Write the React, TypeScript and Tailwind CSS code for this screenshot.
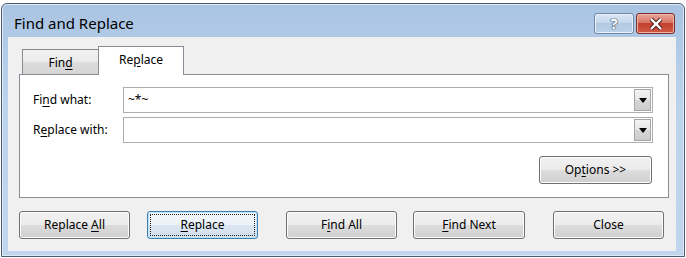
import React from 'react';

const font = "font-['Segoe_UI','Noto_Sans',sans-serif]";

function Key({ children }: { children: React.ReactNode }) {
  return <span className="underline underline-offset-2">{children}</span>;
}

function DropButton() {
  return (
    <div className="flex h-[22px] w-[17px] items-center justify-center border border-[#a6a6a6] bg-[linear-gradient(#f3f3f3_0%,#e6e6e6_50%,#d6d6d6_50%,#cdcdcd_100%)]">
      <svg width="8" height="5" viewBox="0 0 8 5">
        <path d="M0 0h8L4 5z" fill="#000" />
      </svg>
    </div>
  );
}

function Combo({ value }: { value?: string }) {
  return (
    <div className="flex h-[26px] w-[530px] items-center border border-[#abadb3] bg-white pl-[4px] pr-[1px]">
      <div className="flex-1 text-[12px] text-black">{value}</div>
      <DropButton />
    </div>
  );
}

interface IButtonProps {
  children: React.ReactNode;
  focused?: boolean;
  className?: string;
}

function Button({ children, focused, className = '' }: IButtonProps) {
  if (focused) {
    return (
      <div
        className={`flex h-[28px] w-[111px] items-center justify-center rounded-[3px] border border-[#3c7fb1] bg-[linear-gradient(#f3f8fc_0%,#eaf1f8_50%,#dbe6f1_50%,#d2dfec_100%)] p-[2px] shadow-[inset_0_0_0_1px_#c5e3f8] ${className}`}
      >
        <div className="flex h-full w-full items-center justify-center border border-dotted border-[#202020] text-[12px] text-black">
          <span>{children}</span>
        </div>
      </div>
    );
  }
  return (
    <div
      className={`flex h-[28px] w-[111px] items-center justify-center rounded-[3px] border border-[#707070] bg-[linear-gradient(#f2f2f2_0%,#ebebeb_50%,#dddddd_50%,#cfcfcf_100%)] text-[12px] text-black shadow-[inset_0_0_0_1px_#fcfcfc] ${className}`}
    >
      <span>{children}</span>
    </div>
  );
}

export default function App() {
  return (
    <div className={`h-[258px] w-[686px] overflow-hidden bg-white ${font}`}>
      <div className="ml-[1px] mt-[3px] flex h-[254px] w-[684px] flex-col rounded-t-[6px] border border-[#4b5c70] bg-[linear-gradient(#a9c4e2_0%,#bcd3ec_40%,#c0d6ee_100%)] shadow-[inset_0_0_0_1px_#dfeaf6]">
        {/* title bar */}
        <div className="flex h-[33px] items-start">
          <div className="pl-[12px] pt-[10px] text-[15px] leading-[18px] text-black">Find and Replace</div>
          <div className="ml-auto mr-[9px] mt-[9px] flex gap-[2px]">
            <div className="flex h-[21px] w-[40px] items-center justify-center rounded-[3px] border border-[#6f8aa8] bg-[linear-gradient(#d9e6f4_0%,#c5d7ec_50%,#b2c9e3_50%,#bcd2ea_100%)] shadow-[inset_0_0_0_1px_#e8f0f9]">
              <span className="text-[15px] font-bold leading-none text-white [text-shadow:0_0_1px_#42566d,0_0_1px_#42566d,0_0_1px_#42566d,0_0_1px_#42566d]">?</span>
            </div>
            <div className="flex h-[21px] w-[39px] items-center justify-center rounded-[3px] border border-[#7a2e28] bg-[linear-gradient(#e9a99b_0%,#d77565_45%,#c4402f_50%,#d05b47_100%)] shadow-[inset_0_0_0_1px_#eeb4a8]">
              <svg width="14" height="12" viewBox="0 0 14 12">
                <path d="M2 1l5 5 5-5M2 11l5-5 5 5" stroke="#4a1a14" strokeWidth="4.2" fill="none" />
                <path d="M2 1l5 5 5-5M2 11l5-5 5 5" stroke="#fff" strokeWidth="2.4" fill="none" />
              </svg>
            </div>
          </div>
        </div>

        {/* client area */}
        <div className="ml-[6px] flex h-[214px] w-[668px] flex-col bg-[#f0f0f0] px-[11px]">
          {/* tabs */}
          <div className="mt-[9px] flex h-[28px] items-end pl-[3px]">
            <div className="flex h-[25px] w-[76px] items-center justify-center border border-b-0 border-r-0 border-[#898c95] bg-[linear-gradient(#f2f2f2_0%,#ebebeb_50%,#dddddd_50%,#d5d5d5_100%)] pt-[1px] text-[12px] text-black">
              <span>
                Fin<Key>d</Key>
              </span>
            </div>
            <div className="relative z-10 mb-[-1px] flex h-[29px] w-[86px] items-center justify-center border border-b-0 border-[#898c95] bg-white pb-[2px] text-[12px] text-black">
              <span>
                Re<Key>p</Key>lace
              </span>
            </div>
          </div>

          {/* panel */}
          <div className="flex h-[124px] w-[650px] flex-col border border-[#898c95] bg-white pl-[13px] pt-[12px]">
            <div className="flex items-center">
              <div className="w-[90px] text-[12px] text-black">
                Fi<Key>n</Key>d what:
              </div>
              <Combo value="~*~" />
            </div>
            <div className="mt-[4px] flex items-center">
              <div className="w-[90px] text-[12px] text-black">
                R<Key>e</Key>place with:
              </div>
              <Combo />
            </div>
            <div className="mt-[13px] flex w-[619px] justify-end">
              <Button className="w-[113px]">
                Op<Key>t</Key>ions &gt;&gt;
              </Button>
            </div>
          </div>

          {/* buttons */}
          <div className="mt-[13px] flex">
            <Button>
              Replace <Key>A</Key>ll
            </Button>
            <Button focused className="ml-[17px]">
              <Key>R</Key>eplace
            </Button>
            <Button className="ml-[28px]">
              F<Key>i</Key>nd All
            </Button>
            <Button className="ml-[16px] w-[112px]">
              <Key>F</Key>ind Next
            </Button>
            <Button className="ml-[28px]">Close</Button>
          </div>
        </div>
      </div>
    </div>
  );
}
